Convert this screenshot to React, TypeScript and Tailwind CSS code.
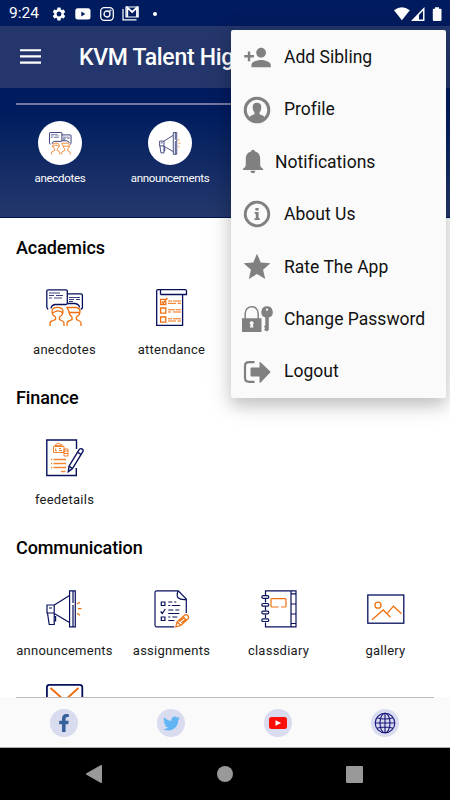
import type { ReactNode } from "react";
import { MdPersonAdd, MdSettings, MdStar } from "react-icons/md";
import { FaFacebookF, FaTwitter } from "react-icons/fa";

const NAVY = "#08105c";
const ORANGE = "#f07010";

const AnecdotesIcon = ({ className = "w-[38px] h-[38px]" }) => (
  <svg viewBox="0 0 38 38" className={className} fill="none" stroke={NAVY} strokeWidth="1.3">
    <path d="M2 20.5 0.8 18V2Q0.8 .8 2 .8H20Q21.3 .8 21.3 2V14Q21.3 15.5 20 15.5H9Q5.5 16 5 19.5" />
    <path d="M21.3 4.8H35Q36.4 4.8 36.4 6V19L34.8 20.5M21.3 14.5H29Q33 15 33.6 18.5" />
    <path d="M3 4H14M3 6.5H8M10 6.5H17M3 9H6M8 9H16M23 8.5H34M23 10.5H28M30 10.5H34M23 12.5H27" strokeWidth=".8" />
    <g stroke={ORANGE}>
      <path d="M4 37V34.5Q4 32.5 6 32L9.5 30.5V28Q6 26 6 22.5Q6 18.3 11.5 18.3T17 22.5Q17 26 13.5 28V30.5L16.5 32Q18 32.7 18 34.5V37M6 24 11 22Q14 21.5 17 24" />
      <path d="M21 37V34.5Q21 32.5 23 32L26 30.5V28Q23 26 23 22.5L21 18.5H30Q34 19 34 22.5Q34 26 30.5 28V30.5L33.5 32Q35 32.7 35 34.5V37M23 23.5H34" />
    </g>
  </svg>
);

const AnnouncementsIcon = ({ className = "w-[38px] h-[38px]" }) => (
  <svg viewBox="0 0 38 38" className={className} fill="none" stroke={NAVY} strokeWidth="1.2">
    <path d="M23.6 .8H29.3V36.8H23.6ZM27 1V13M27 15V36.5" />
    <path d="M8.3 15 23.5 5.5M8.3 23.5 23.5 32.5" />
    <path d="M1 15H8.2V23H1ZM3 18H6M1.5 23 3.2 34.5H8.2V23M8.3 26.5H9.6V31H8.3" />
    <path d="M31 14 34 12.2M32 18.6H35.5M31 23.3 34 25.2" stroke={ORANGE} />
  </svg>
);

const AttendanceIcon = () => (
  <svg viewBox="-3 0 38 38" className="w-[38px] h-[38px]" fill="none" stroke={NAVY} strokeWidth="1.3">
    <path d="M4.5 5.5V1.5Q4.5 .7 3.5 .7H2Q.7 .7 .7 2V36.3H26.6V6M3 .7H29Q30.5 .7 30.5 2.5V5.5H4.5" />
    <g stroke={ORANGE}>
      <path d="M10 10.3H4.6V15.5H9.8V12.5M6 12.5 7.3 14 11.5 9M4.6 19H9.8V24.2H4.6ZM4.6 28H9.8V33.2H4.6Z" />
      <path d="M12 12H16M17 12H25M12 14.3H20M21.5 14.3H25M12 20.8H19M20 20.8H25M12 23H15M17 23H25M12 29.8H16M17 29.8H25M12 32H20M21.5 32H25" strokeWidth="1" />
    </g>
  </svg>
);

const FeeIcon = () => (
  <svg viewBox="0 0 38 38" className="w-[38px] h-[38px]" fill="none" stroke={NAVY} strokeWidth="1.4">
    <path d="M30.5 10V1H.8V36.5H30.3V29" />
    <path d="M22.3 32.6 23 27.2 33 10.8Q34 9 36 10T36.5 13.2L26.5 29.5ZM23 27.2 26.5 29.5M31.5 13.2 35 15.5" />
    <g stroke={ORANGE} strokeWidth="1" strokeOpacity=".85">
      <path d="M7.5 7.5H18V13.5H7.5ZM8.5 6.5 12 4 17 6.5M9 6.5H15.5M9.5 9.5V11.8H11M13 9.5H15M13 11.5H16" />
      <path d="M18 10H22V17H18ZM18 12H22M18 14.5H22" />
      <path d="M7.5 20.5H20M7.5 24.5H20M7.5 28.5H20M15 32.5H19.5M5 20.5H6.2M5 24.5H6.2M5 28.5H6.2" strokeWidth="1.4" />
    </g>
  </svg>
);

const AssignmentsIcon = () => (
  <svg viewBox="-1.3 0 38 38" className="w-[38px] h-[38px]" fill="none" stroke={NAVY} strokeWidth="1.2">
    <path d="M20 36.8H2Q.7 36.8 .7 35V3Q.7 .8 2.5 .8H24L32 9V23M24 .8Q22 5 23.5 7.5Q26 10 31.8 9.5" />
    <path d="M7 12H10.6V15.5H7ZM7 27H10.6V30.5H7ZM6.3 21.5 8 23.5 11 19" />
    <path d="M14 12H18M20 12H22M14 15.5H16M17.5 15.5H26M14 20H19M21 20H25M14 23.5H25M14 27H16M18 27H23M14 30.5H20" />
    <path d="M21.5 36.8 22.8 31.8 30.5 25Q32 24 33.5 25.5T34 28.7L26.5 35.5ZM22.8 31.8 26.5 35.5M29 26.8 32.5 30.5M25 31.5 30 27.5M27 33 32 29" stroke={ORANGE} />
  </svg>
);

const DiaryIcon = () => (
  <svg viewBox="-.5 0 38 38" className="w-[38px] h-[38px]" fill="none" stroke={NAVY} strokeWidth="1.2">
    <path d="M5 5V.8H35.5V36.8H5V32.5M5 9V12.5M5 16.5V20.5M5 24.5V28M30.5 1V36.5M31 3.8H35M31 14H35M31 24H35M31 33.5H35" />
    <g fill="white">
      <rect x="1.3" y="5.7" width="7" height="2.6" rx="1.3" />
      <rect x="1.3" y="13.5" width="7" height="2.6" rx="1.3" />
      <rect x="1.3" y="21.2" width="7" height="2.6" rx="1.3" />
      <rect x="1.3" y="28.9" width="7" height="2.6" rx="1.3" />
    </g>
    <path d="M18 17H11.5Q10.5 17 10.5 16V9.5Q10.5 8.6 11.5 8.6H24.5Q25.5 8.6 25.5 9.5V16Q25.5 17 24.5 17H20.5" stroke={ORANGE} />
  </svg>
);

const GalleryIcon = () => (
  <svg viewBox="0 0 38 38" className="w-[38px] h-[38px]" fill="none" stroke={NAVY} strokeWidth="1.3">
    <rect x=".8" y="5" width="36" height="28.2" />
    <g stroke={ORANGE}>
      <circle cx="11" cy="15.2" r="3" />
      <path d="M5 29.7 16.2 20 23.5 27.2M20 23.7 26.4 16.2 34.5 23.7" />
    </g>
  </svg>
);

const MailIcon = () => (
  <svg viewBox="0 0 38 38" className="w-[38px] h-[38px]" fill="none" stroke={NAVY} strokeWidth="1.8">
    <rect x=".9" y="5.8" width="35.4" height="26" rx="2.5" />
    <path d="M4.5 9 18.6 21.5 32.5 9" stroke={ORANGE} strokeWidth="2" />
  </svg>
);

const ProfileIcon = () => (
  <svg viewBox="0 0 28 28" className="w-7 h-7">
    <circle cx="14" cy="14" r="11.8" fill="none" stroke="#808080" strokeWidth="3" />
    <path d="M14 6.7C17.2 6.7 18.6 8.8 18.3 11.7L17.7 14.7 16.6 16.2V18.3C17.8 19.2 20.5 19.3 21.6 21.3Q18.5 25 14 25T6.4 21.3C7.5 19.3 10.2 19.2 11.4 18.3V16.2L10.3 14.7 9.7 11.7C9.4 8.8 10.8 6.7 14 6.7Z" fill="#808080" />
  </svg>
);

const BellIcon = () => (
  <svg viewBox="0 0 20 25" className="w-5 h-[25px]" fill="#808080">
    <path d="M10 .7C11.3 .7 12 1.5 12 2.6C15.6 3.4 17.2 6.3 17.2 10V15.5C17.2 17.8 18.3 18.8 20 19.7V21H0V19.7C1.7 18.8 2.8 17.8 2.8 15.5V10C2.8 6.3 4.4 3.4 8 2.6C8 1.5 8.7 .7 10 .7ZM7.3 21.8H12.4Q12 24.3 10 24.3T7.3 21.8Z" />
  </svg>
);

const InfoIcon = () => (
  <svg viewBox="0 0 28 28" className="w-7 h-7">
    <circle cx="14" cy="14" r="11.8" fill="none" stroke="#808080" strokeWidth="2.8" />
    <path d="M12.4 8H15.6V10.4H12.4ZM11.6 12H15.6V18.2H16.8V20H11.5V18.2H12.8V13.8H11.6Z" fill="#808080" />
  </svg>
);

const LockKeyIcon = () => (
  <svg viewBox="0 0 32 28" className="w-8 h-7" fill="#808080">
    <path d="M4.2 14V8.5C4.2 -.5 17.2 -.5 17.2 8.5V14" fill="none" stroke="#808080" strokeWidth="1.5" />
    <path fillRule="evenodd" d="M1 13.2H20.5V27H1ZM10.7 16.2A1.9 1.9 0 0 0 9.5 19.6L9 22.5H12.4L11.9 19.6A1.9 1.9 0 0 0 10.7 16.2Z" />
    <path fillRule="evenodd" d="M26 1.3A5.8 5.8 0 0 1 27.8 12.6V24.7L26 26.4 22.9 24.7 24.3 23.3 22.9 21.8 24.3 20.3V12.6A5.8 5.8 0 0 1 26 1.3ZM26 3.4A1.2 1.2 0 1 0 26 5.8A1.2 1.2 0 1 0 26 3.4Z" />
  </svg>
);

const LogoutIcon = () => (
  <svg viewBox="0 0 28 28" className="w-7 h-7">
    <path d="M11.5 4.2H6Q2 4.2 2 8V20Q2 23.8 6 23.8H11.5" fill="none" stroke="#808080" strokeWidth="2.2" />
    <path d="M8.5 9.5H16.5V4.2Q17 3.7 17.6 4.2L27.3 13.5V14.5L17.6 24.5Q17 25 16.5 24.5V18.5H8.5Q7.5 18.5 7.5 17.5V10.5Q7.5 9.5 8.5 9.5Z" fill="#808080" />
  </svg>
);

const menuItems: { label: string; icon: ReactNode; pad: string }[] = [
  { label: "Add Sibling", icon: <MdPersonAdd className="w-[29px] h-[29px] text-[#808080]" />, pad: "pl-3 gap-3" },
  { label: "Profile", icon: <ProfileIcon />, pad: "pl-3 gap-[13px]" },
  { label: "Notifications", icon: <BellIcon />, pad: "pl-3 gap-3" },
  { label: "About Us", icon: <InfoIcon />, pad: "pl-3 gap-[13px]" },
  { label: "Rate The App", icon: <MdStar className="w-8 h-8 text-[#808080]" />, pad: "pl-2.5 gap-[11px]" },
  { label: "Change Password", icon: <LockKeyIcon />, pad: "pl-2.5 gap-[11px]" },
  { label: "Logout", icon: <LogoutIcon />, pad: "pl-3 gap-[13px]" },
];

const sections: { title: string; items: { label?: string; icon: ReactNode }[] }[] = [
  {
    title: "Academics",
    items: [
      { label: "anecdotes", icon: <AnecdotesIcon /> },
      { label: "attendance", icon: <AttendanceIcon /> },
    ],
  },
  { title: "Finance", items: [{ label: "feedetails", icon: <FeeIcon /> }] },
  {
    title: "Communication",
    items: [
      { label: "announcements", icon: <AnnouncementsIcon /> },
      { label: "assignments", icon: <AssignmentsIcon /> },
      { label: "classdiary", icon: <DiaryIcon /> },
      { label: "gallery", icon: <GalleryIcon /> },
      { icon: <MailIcon /> },
    ],
  },
];

const StatusBar = () => (
  <div className="flex h-[26px] shrink-0 items-center bg-[#001b5e] pl-[9px] pr-[7px] pt-px text-white">
    <span className="w-[42px] pt-px text-[15.5px] leading-none">9:24</span>
    <MdSettings className="w-4 h-4" />
    <svg viewBox="0 0 16 12" className="ml-2 w-4 h-3">
      <rect x=".3" y=".3" width="15.2" height="11.2" rx="2.5" fill="white" />
      <path d="M6.3 3.5 10.3 6 6.3 8.5Z" fill="#001b5e" />
    </svg>
    <svg viewBox="0 0 14 14" className="ml-[9px] w-3.5 h-3.5" fill="none" stroke="white" strokeWidth="1.3">
      <rect x=".7" y=".7" width="12.6" height="12.6" rx="3.5" />
      <circle cx="7" cy="7" r="3" />
      <circle cx="10.5" cy="3.5" r=".4" />
    </svg>
    <svg viewBox="0 0 18 15" className="ml-2 w-[18px] h-[15px]" fill="none" stroke="white">
      <path d="M1 3V13.8H14.5" strokeWidth="1.2" />
      <path d="M4 11V1H16.2V11Z" strokeWidth="1.2" />
      <path d="M5.3 11V1.5L10.2 6 15 1.5V11" strokeWidth="1.8" />
    </svg>
    <span className="ml-[13px] w-1 h-1 rounded-full bg-white" />
    <svg viewBox="0 0 50 16" className="ml-auto w-[50px] h-4" fill="white">
      <path d="M1 4.2Q8.8 -1.5 16.8 4.2L8.9 14.3Z" />
      <path fillRule="evenodd" d="M31.5 1V15H18ZM30 4.8 26 9V13.5H30Z" />
      <path d="M42 1.2H46V2.7H47.5Q48.5 2.7 48.5 3.7V14Q48.5 15 47.5 15H40.8Q39.8 15 39.8 14V3.7Q39.8 2.7 40.8 2.7H42Z" />
    </svg>
  </div>
);

const Banner = () => (
  <div className="h-[130px] shrink-0 border-b border-[#001650] bg-linear-to-b from-[#001b5e] from-15% to-[#24386c] px-4 pt-[15px] text-white">
    <div className="h-0.5 bg-[#7478a0]" />
    <div className="-ml-[11px] flex pt-4">
      <div className="flex w-[110px] flex-col items-center">
        <div className="flex w-11 h-11 items-center justify-center rounded-full bg-white">
          <AnecdotesIcon className="w-[23px] h-[23px]" />
        </div>
        <span className="mt-[5px] text-[11.5px] leading-4 tracking-[-0.3px]">anecdotes</span>
      </div>
      <div className="flex w-[110px] flex-col items-center">
        <div className="flex w-11 h-11 items-center justify-center rounded-full bg-white">
          <AnnouncementsIcon className="w-[23px] h-[23px]" />
        </div>
        <span className="mt-[5px] text-[11.5px] leading-4 tracking-[-0.3px]">announcements</span>
      </div>
    </div>
  </div>
);

const Footer = () => (
  <footer className="h-[51px] shrink-0 border-b border-[#b0b0b0] bg-[#fafafa]">
    <div className="mx-4 h-px bg-[#bcbcbc]" />
    <div className="ml-[10.5px] grid w-[428px] grid-cols-4 justify-items-center pt-[11px]">
      <div className="flex w-7 h-7 items-center justify-center rounded-full bg-[#d9dbef]">
        <FaFacebookF className="w-[18px] h-[18px] text-[#34609c]" />
      </div>
      <div className="flex w-7 h-7 items-center justify-center rounded-full bg-[#d9dbef]">
        <FaTwitter className="w-[17px] h-[17px] text-[#62b5f4]" />
      </div>
      <div className="flex w-7 h-7 items-center justify-center rounded-full bg-[#d9dbef]">
        <svg viewBox="0 0 18 12" className="w-[18px] h-3">
          <rect width="18" height="12" rx="2.5" fill="#fb1008" />
          <path d="M6.5 3.2 12.2 6 6.5 8.8Z" fill="white" />
        </svg>
      </div>
      <div className="flex w-7 h-7 items-center justify-center rounded-full bg-[#d9dbef]">
        <svg viewBox="0 0 22 22" className="w-[22px] h-[22px]" fill="none" stroke="#15157a" strokeWidth="1.1">
          <circle cx="11" cy="11" r="9.8" />
          <ellipse cx="11" cy="11" rx="5" ry="9.8" />
          <path d="M11 1V21M1 11H21M3 5.8Q11 8.2 19 5.8M3 16.2Q11 13.8 19 16.2" />
        </svg>
      </div>
    </div>
  </footer>
);

export default function App() {
  return (
    <div className="relative flex h-[800px] w-[450px] flex-col overflow-hidden bg-white font-['Roboto',sans-serif] text-black">
      <StatusBar />

      <header className="flex h-[62px] shrink-0 items-center bg-[#24366b] pl-5 text-white">
        <svg viewBox="0 0 21 16" className="w-[21px] h-4" stroke="white" strokeWidth="2.1">
          <path d="M0 1.2H21M0 7.4H21M0 13.6H21" />
        </svg>
        <h1 className="ml-[38px] w-[152px] overflow-hidden whitespace-nowrap pt-[3px] text-[23px] font-medium tracking-[-0.3px]">
          KVM Talent Hig
        </h1>
      </header>

      <Banner />

      <main className="min-h-0 flex-1 overflow-hidden">
        {sections.map((section) => (
          <section key={section.title} className="min-h-[150.4px] pt-[17.5px]">
            <h2 className="pl-4 text-[18px] font-medium leading-6 tracking-[-0.1px]">{section.title}</h2>
            <div className="ml-[11px] grid w-[428px] grid-cols-4 gap-y-[19px] pt-[29.5px]">
              {section.items.map((item, index) => (
                <div key={index} className="flex flex-col items-center">
                  {item.icon}
                  {item.label && (
                    <span className="mt-[14px] text-[13px] leading-[18px] tracking-[0.25px] text-[#1a1a1a]">{item.label}</span>
                  )}
                </div>
              ))}
            </div>
          </section>
        ))}
      </main>

      <Footer />

      {/* Android navigation */}
      <nav className="flex h-[52px] shrink-0 items-center bg-black pl-[85px]">
        <svg viewBox="0 0 18 20" className="w-[18px] h-5" fill="#999">
          <path d="M1.5 9.2 15.5 1.2Q17 .6 17 2V18Q17 19.4 15.5 18.8L1.5 10.8Q.2 10 1.5 9.2Z" />
        </svg>
        <span className="ml-[114px] w-4 h-4 rounded-full bg-[#999]" />
        <span className="ml-[113px] w-[17px] h-[17px] rounded-[1px] bg-[#999]" />
      </nav>

      {/* Overflow menu */}
      <div className="absolute left-[231px] top-[30px] h-[368px] w-[215px] rounded-[2px] bg-[#fafafa] pt-px shadow-[0_8px_14px_rgba(0,0,0,0.15),0_5px_28px_rgba(0,0,0,0.14)]">
        {menuItems.map((item) => (
          <div key={item.label} className={`flex h-[52.4px] items-center ${item.pad}`}>
            {item.icon}
            <span className="whitespace-nowrap text-[17.5px] tracking-[0.02px] text-[#111]">{item.label}</span>
          </div>
        ))}
      </div>
    </div>
  );
}
